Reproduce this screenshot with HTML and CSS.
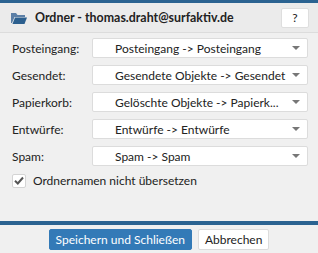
FILE: index.html
```html
<!DOCTYPE html>
<html lang="de">
<head>
  <meta charset="UTF-8" />
  <title>Ordner</title>
  <link rel="stylesheet" href="styles.css">
</head>
<body>
  <div class="dialog">
    <div class="dialog-header">
      <svg class="folder-icon" width="16" height="12" viewBox="0 0 16 12">
        <path d="M0 1 L0 11 L1 11 L3.5 5 L14 5 L14 3 L6.5 3 L5 1 Z" fill="#5b7fa6"/>
        <path d="M1.5 12 L4 5.5 L16 5.5 L13.5 12 Z" fill="#2b5f8e"/>
      </svg>
      <span class="title">Ordner - thomas.draht@surfaktiv.de</span>
      <button class="help-btn">?</button>
    </div>

    <div class="dialog-body">
      <div class="row">
        <label class="row-label">Posteingang:</label>
        <div class="select"><span class="select-text">Posteingang -&gt; Posteingang</span><span class="caret"></span></div>
      </div>
      <div class="row">
        <label class="row-label">Gesendet:</label>
        <div class="select"><span class="select-text">Gesendete Objekte -&gt; Gesendet</span><span class="caret"></span></div>
      </div>
      <div class="row">
        <label class="row-label">Papierkorb:</label>
        <div class="select"><span class="select-text">Gelöschte Objekte -&gt; Papierk...</span><span class="caret"></span></div>
      </div>
      <div class="row">
        <label class="row-label">Entwürfe:</label>
        <div class="select"><span class="select-text">Entwürfe -&gt; Entwürfe</span><span class="caret"></span></div>
      </div>
      <div class="row">
        <label class="row-label">Spam:</label>
        <div class="select"><span class="select-text">Spam -&gt; Spam</span><span class="caret"></span></div>
      </div>

      <div class="check-row">
        <span class="checkbox">
          <svg width="10" height="9" viewBox="0 0 10 9">
            <path d="M1 4.8 L3.8 7.5 L9 1.5" fill="none" stroke="#555" stroke-width="2"/>
          </svg>
        </span>
        <span class="check-label">Ordnernamen nicht übersetzen</span>
      </div>
    </div>

    <div class="dialog-footer">
      <button class="btn btn-primary">Speichern und Schließen</button>
      <button class="btn">Abbrechen</button>
    </div>
  </div>
</body>
</html>
```

FILE: styles.css
```css
html, body {
  margin: 0;
  padding: 0;
  background: #f0f0f0;
}

.dialog {
  width: 318px;
  height: 253px;
  border-top: 3px solid #2b6391;
  box-sizing: border-box;
  font-family: 'Lato', 'Noto Sans', sans-serif;
  font-size: 12px;
  color: #222;
  display: flex;
  flex-direction: column;
}

.dialog-header {
  height: 30px;
  display: flex;
  align-items: center;
  padding: 0 9px 0 11px;
  background: #ebebeb;
  border-bottom: 1px solid #dcdcdc;
  box-sizing: border-box;
  flex: none;
}

.folder-icon {
  margin-right: 8px;
  margin-top: 1px;
}

.title {
  font-weight: bold;
  font-size: 12.4px;
  flex: 1;
}

.help-btn {
  width: 28px;
  height: 20px;
  background: #fff;
  border: 1px solid #dedede;
  border-radius: 2px;
  font-family: inherit;
  font-size: 12px;
  padding: 0;
  color: #222;
}

.dialog-body {
  flex: 1;
  padding: 5px 10px 0 12px;
}

.row {
  display: grid;
  grid-template-columns: 80px 1fr;
  align-items: center;
  height: 20px;
  margin-bottom: 7px;
}

.select {
  height: 20px;
  background: #fff;
  border: 1px solid #dcdcdc;
  border-radius: 2px;
  box-sizing: border-box;
  display: flex;
  align-items: center;
  padding: 0 7px 0 22px;
  min-width: 0;
}

.select-text {
  flex: 1;
  white-space: nowrap;
  overflow: hidden;
  text-overflow: ellipsis;
  padding-right: 2px;
}

.caret {
  width: 0;
  height: 0;
  border-left: 4px solid transparent;
  border-right: 4px solid transparent;
  border-top: 4px solid #777;
}

.check-row {
  display: flex;
  align-items: center;
  margin-top: 5px;
}

.checkbox {
  width: 14px;
  height: 14px;
  background: #fff;
  border: 1px solid #d4d4d4;
  border-radius: 2px;
  box-sizing: border-box;
  display: flex;
  align-items: center;
  justify-content: center;
  margin-right: 7px;
}

.dialog-footer {
  border-top: 4px solid #2b6391;
  height: 32px;
  box-sizing: border-box;
  flex: none;
  display: flex;
  justify-content: center;
  align-items: center;
  gap: 6px;
}

.btn {
  height: 21px;
  padding: 0 6px;
  background: #fff;
  border: 1px solid #dcdcdc;
  border-radius: 2px;
  font-family: inherit;
  font-size: 12px;
  color: #222;
}

.btn-primary {
  background: #337ab7;
  border-color: #337ab7;
  color: #fff;
}
```
